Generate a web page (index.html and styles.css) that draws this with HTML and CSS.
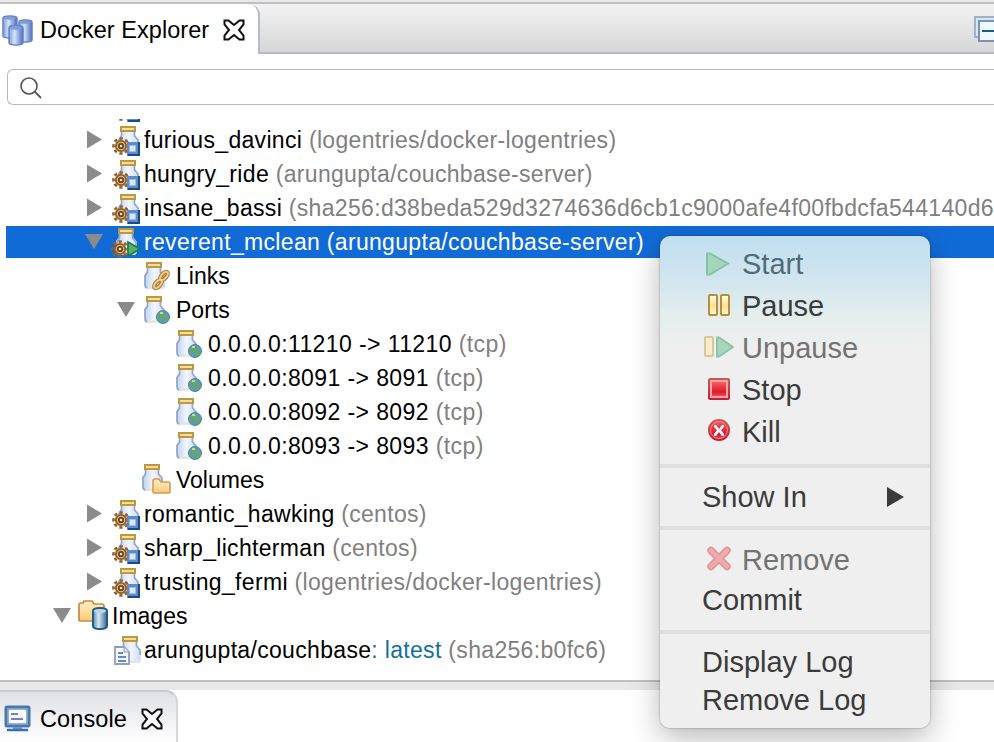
FILE: index.html
```
<!DOCTYPE html>
<html lang="en">
<head>
<meta charset="utf-8">
<title>Docker Explorer</title>
<link rel="stylesheet" href="styles.css">
</head>
<body>
<svg class="defs" aria-hidden="true">
  <defs>
    <linearGradient id="glass"><stop stop-color="#bccfe9"/><stop offset=".5" stop-color="#f1f6ff"/><stop offset="1" stop-color="#cfdcf1"/></linearGradient>
    <linearGradient id="cyl"><stop stop-color="#7f9fdb"/><stop offset=".4" stop-color="#d3e3f8"/><stop offset="1" stop-color="#4d6cbd"/></linearGradient>
    <linearGradient id="steel"><stop stop-color="#5689ac"/><stop offset=".4" stop-color="#d5e8f2"/><stop offset="1" stop-color="#38658f"/></linearGradient>
    <linearGradient id="folder" x2="0" y2="1"><stop stop-color="#fff0c2"/><stop offset="1" stop-color="#f7c97c"/></linearGradient>
    <linearGradient id="pausefill" x2="0" y2="1"><stop stop-color="#fff"/><stop offset=".55" stop-color="#ffe08c"/><stop offset="1" stop-color="#fffbe8"/></linearGradient>
    <linearGradient id="red" x2="0" y2="1"><stop stop-color="#f0606a"/><stop offset=".7" stop-color="#e0182b"/><stop offset="1" stop-color="#ee4a57"/></linearGradient>
    <linearGradient id="rededge" x2="0" y2="1"><stop stop-color="#c75c54"/><stop offset="1" stop-color="#c91b37"/></linearGradient>
    <g id="jar">
      <path d="M3 9h14v3l4 5v9q0 4-3 4H4q-4 0-4-4V16l3-4z" fill="url(#glass)"/>
      <path d="M3.500 9v4L1 17v8q0 3 2 4M16.500 9v4l3.500 4v5" fill="none" stroke="#93a9c8" stroke-width="1.700"/>
      <path d="M4 28.500h12" stroke="#e6e4d2" stroke-width="2"/>
      <path d="M2 3h16v6H2z" fill="#bd9843"/><path d="M4 5h12v2H4z" fill="#f5df95"/>
    </g>
    <g id="gear">
      <circle cx="9" cy="9" r="7.500" fill="none" stroke="#94602c" stroke-width="2.600" stroke-dasharray="3.200 2.690" stroke-dashoffset="1.600"/>
      <circle cx="9" cy="9" r="5.200" fill="#edb750" stroke="#8f5a25" stroke-width="1.800"/>
      <circle cx="9" cy="9" r="2.200" fill="#f4e6d0" stroke="#5b443c" stroke-width="1.800"/>
    </g>
    <g id="stopped">
      <use href="#jar" x="6"/>
      <use href="#gear" y="14"/>
      <path d="M15 19h13v14H15z" fill="#5f8bc8"/><path d="M27 19v13H16" fill="none" stroke="#174b8a" stroke-width="2"/>
      <path d="M17.500 22.500h6v6h-6z" fill="#d9e8fb" stroke="#9dbbe4"/>
    </g>
    <g id="running">
      <use href="#jar" x="4"/>
      <use href="#gear" x="-1" y="15"/>
      <path d="M16 17l12 7-12 7z" fill="#5aae72" stroke="#16804c" stroke-width="1.800"/>
    </g>
    <g id="ports">
      <use href="#jar"/>
      <circle cx="19" cy="24" r="6.500" fill="#579cba" stroke="#4a85a8"/>
      <path d="M15 20l5-1 1 3-3 3-4-1zM20 25l4-2-1 5-3 1zM14 26l3 1v2z" fill="#72a747"/>
      <path d="M16 20l3 0" stroke="#cbe9e9" stroke-width="1.500"/>
    </g>
    <g id="links">
      <use href="#jar"/>
      <g fill="none" stroke="#b07a36" stroke-width="4.200"><ellipse cx="14" cy="25" rx="5" ry="2.500" transform="rotate(-48 14 25)"/><ellipse cx="20" cy="17" rx="5" ry="2.500" transform="rotate(-48 20 17)"/></g>
      <g fill="none" stroke="#f0cf90" stroke-width="1.900"><ellipse cx="14" cy="25" rx="5" ry="2.500" transform="rotate(-48 14 25)"/><ellipse cx="20" cy="17" rx="5" ry="2.500" transform="rotate(-48 20 17)"/></g>
    </g>
    <g id="volumes">
      <use href="#jar" x="-2" y="-2"/>
      <path d="M9 18q0-2 2-2h4l2 3h7q2 0 2 2v8q0 1-1 1H10q-1 0-1-1z" fill="url(#folder)" stroke="#d79a4f" stroke-width="1.600"/>
    </g>
    <g id="images">
      <path d="M-1 6q0-2 2-2h2l1-2h8l2 3h8q2 0 2 2v14q0 1-1 1H0q-1 0-1-1z" fill="url(#folder)" stroke="#c98a42" stroke-width="1.700"/>
      <path d="M13 12q0-3 7-3t7 3v15q0 3-7 3t-7-3z" fill="url(#steel)" stroke="#1f5c88" stroke-width="2"/>
      <ellipse cx="20" cy="12" rx="6" ry="2" fill="#b7d5e4"/>
    </g>
    <g id="image">
      <use href="#jar" x="8"/>
      <path d="M3 14h9l5 5v12H3z" fill="#f5f9ff" stroke="#8d9fba" stroke-width="1.800"/>
      <path d="M12 14v5h5" fill="#dbe4f1" stroke="#8d9fba"/>
      <path d="M6 20h5M6 24h8M6 28h8" stroke="#6788c8" stroke-width="1.800"/>
    </g>
    <path id="right" d="M7 7.500v18L22 16.500z" fill="#8b8b8b"/>
    <path id="down" d="M5 9h18l-9 15z" fill="#8b8b8b"/>
    <path id="close" d="M1.500 1.500h4l5.500 4.500 5.500-4.500h4v4l-4.500 5.500 4.500 5.500v4h-4L11 16l-5.500 4.500h-4v-4L6 11 1.500 5.500z" fill="#fff" stroke="#111" stroke-width="2"/>
  </defs>
</svg>

<div class="workbench">
  <header class="tabbar">
    <div class="tab">
      <svg class="docker" viewBox="0 0 31 31">
        <g fill="url(#cyl)" stroke="#6282c8" stroke-width="1.500"><path d="M1 3q0-2 7-2t7 2v18q0 2-7 2t-7-2z"/><path d="M17 7q0-2 6.500-2t6.500 2v18q0 2-6.500 2T17 25z"/><path d="M7 13q0-2.500 7-2.500t7 2.500v14.500q0 2.500-7 2.500t-7-2.500z"/></g>
        <g fill="#7f9bd8"><ellipse cx="8" cy="3.300" rx="6" ry="1.500"/><ellipse cx="23.500" cy="7.300" rx="5.500" ry="1.500"/><ellipse cx="14" cy="13" rx="6" ry="1.700"/></g>
      </svg>
      <span class="tab-title">Docker Explorer</span>
      <svg class="close"><use href="#close"/></svg>
    </div>
    <div class="toolbar">
      <svg class="collapse" viewBox="0 0 20 28"><path d="M1 1h24v20H1z" fill="#cfeaf6" stroke="#a3afc7" stroke-width="2"/><path d="M5 5h24v20H5z" fill="#eefaff" stroke="#8090b4" stroke-width="2"/><path d="M8 15h12" stroke="#175b93" stroke-width="2"/></svg>
    </div>
  </header>

  <div class="search">
    <svg viewBox="0 0 24 24"><circle cx="10" cy="10" r="8" fill="none" stroke="#555" stroke-width="1.600"/><path d="M15.700 15.700l6.300 6.300" stroke="#555" stroke-width="1.800"/></svg>
  </div>

  <main class="tree">
    <div class="row l2 clipped"><svg></svg><svg><use href="#stopped"/></svg></div>
    <div class="row l2"><svg><use href="#right"/></svg><svg><use href="#stopped"/></svg><span>furious_davinci <i>(logentries/docker-logentries)</i></span></div>
    <div class="row l2"><svg><use href="#right"/></svg><svg><use href="#stopped"/></svg><span>hungry_ride <i>(arungupta/couchbase-server)</i></span></div>
    <div class="row l2"><svg><use href="#right"/></svg><svg><use href="#stopped"/></svg><span>insane_bassi <i>(sha256:d38beda529d3274636d6cb1c9000afe4f00fbdcfa544140d6e</i></span></div>
    <div class="row l2 selected"><svg><use href="#down"/></svg><svg><use href="#running"/></svg><span>reverent_mclean <i>(arungupta/couchbase-server)</i></span></div>
    <div class="row l3"><svg></svg><svg><use href="#links"/></svg><span class="label">Links</span></div>
    <div class="row l3"><svg><use href="#down"/></svg><svg><use href="#ports"/></svg><span class="label">Ports</span></div>
    <div class="row l4"><svg></svg><svg><use href="#ports"/></svg><span class="port">0.0.0.0:11210 -&gt; 11210 <i>(tcp)</i></span></div>
    <div class="row l4"><svg></svg><svg><use href="#ports"/></svg><span class="port">0.0.0.0:8091 -&gt; 8091 <i>(tcp)</i></span></div>
    <div class="row l4"><svg></svg><svg><use href="#ports"/></svg><span class="port">0.0.0.0:8092 -&gt; 8092 <i>(tcp)</i></span></div>
    <div class="row l4"><svg></svg><svg><use href="#ports"/></svg><span class="port">0.0.0.0:8093 -&gt; 8093 <i>(tcp)</i></span></div>
    <div class="row l3"><svg></svg><svg><use href="#volumes"/></svg><span class="label">Volumes</span></div>
    <div class="row l2"><svg><use href="#right"/></svg><svg><use href="#stopped"/></svg><span>romantic_hawking <i>(centos)</i></span></div>
    <div class="row l2"><svg><use href="#right"/></svg><svg><use href="#stopped"/></svg><span>sharp_lichterman <i>(centos)</i></span></div>
    <div class="row l2"><svg><use href="#right"/></svg><svg><use href="#stopped"/></svg><span>trusting_fermi <i>(logentries/docker-logentries)</i></span></div>
    <div class="row l1"><svg><use href="#down"/></svg><svg><use href="#images"/></svg><span class="label">Images</span></div>
    <div class="row l2"><svg></svg><svg><use href="#image"/></svg><span>arungupta/couchbase<b>: latest</b> <i>(sha256:b0fc6)</i></span></div>
  </main>

  <div class="sash"></div>
  <footer class="console">
    <div class="console-tab">
      <svg class="monitor" viewBox="0 0 28 28"><rect x="2" y="2" width="23" height="19" rx="1" fill="#f6faff" stroke="#4278b6" stroke-width="3"/><path d="M4 4h19v15H4z" fill="none" stroke="#8194b6" stroke-width="1.500"/><path d="M7 9h7M7 14h12" stroke="#7580b4" stroke-width="2"/><path d="M9 22h9v2H9z" fill="#7d97bd"/><path d="M3 25h21" stroke="#376eae" stroke-width="2.500"/></svg>
      <span class="tab-title">Console</span>
      <svg class="close"><use href="#close"/></svg>
    </div>
  </footer>
</div>

<nav class="menu">
  <div class="item off"><svg viewBox="0 0 34 34"><path d="M7 6.500h3L28 16.500 10 27.500H7z" fill="#a6d5bb" stroke="#83c4a8" stroke-width="2"/></svg><span>Start</span></div>
  <div class="item"><svg viewBox="0 0 34 34"><g fill="url(#pausefill)" stroke="#b98f32" stroke-width="2"><rect x="9" y="6" width="8" height="20" rx="1"/><rect x="21" y="6" width="8" height="20" rx="1"/></g></svg><span>Pause</span></div>
  <div class="item off"><svg viewBox="0 0 34 34"><rect x="5" y="6" width="8" height="19" rx="1" fill="#f6edcf" stroke="#d9c79a" stroke-width="2"/><path d="M17 6.500h2l14 9.500-14 9.500h-2z" fill="#a9d5bc" stroke="#8bc4a9" stroke-width="2"/></svg><span>Unpause</span></div>
  <div class="item"><svg viewBox="0 0 34 34"><rect x="9" y="6" width="20" height="20" rx="1" fill="#f4a5a3" stroke="url(#rededge)" stroke-width="2"/><path d="M12 9h14v14H12z" fill="url(#red)"/></svg><span>Stop</span></div>
  <div class="item"><svg viewBox="0 0 34 34"><circle cx="19" cy="15" r="10" fill="url(#red)" stroke="url(#rededge)" stroke-width="2"/><circle cx="19" cy="15" r="8.500" fill="none" stroke="#f4a09b" stroke-width=".8"/><path d="M14 10h2l3 4 3-4h2v2l-3 3 3 4v2h-2l-3-4-3 4h-2v-2l3-4-3-3z" fill="#fff"/></svg><span>Kill</span></div>
  <hr>
  <div class="item plain show"><span>Show In</span><svg class="submenu" viewBox="0 0 18 20"><path d="M0 0v20l17-10z" fill="#3b3b3b"/></svg></div>
  <hr class="flush">
  <div class="item off remove"><svg viewBox="0 0 34 34"><g fill="none" stroke-linecap="round"><path d="M11 7.500l16 16M27 7.500l-16 16" stroke="#df979b" stroke-width="7.500"/><path d="M11 7.500l16 16M27 7.500l-16 16" stroke="#f2a9ac" stroke-width="4.500"/></g></svg><span>Remove</span></div>
  <div class="item plain">Commit</div>
  <hr>
  <div class="item plain display">Display Log</div>
  <div class="item plain">Remove Log</div>
</nav>
</body>
</html>
```
FILE: styles.css
```
* { box-sizing: border-box; }
body {
  margin: 0;
  width: 994px;
  height: 742px;
  overflow: hidden;
  background: #fff;
  color: #000;
  font: 23px/34px "Liberation Sans", Arial, sans-serif;
  letter-spacing: .32px;
}
svg { display: block; flex: none; }
.defs { position: absolute; width: 0; height: 0; }
i { font-style: normal; color: #808080; }
b { font-weight: normal; color: #12709c; }

.workbench { display: flex; flex-direction: column; height: 742px; }

.tabbar {
  display: flex;
  height: 54px;
  flex: none;
  border-top: 2px solid #e8e8e8;
}
.tab {
  display: flex;
  align-items: center;
  width: 260px;
  padding: 2px 0 0 2px;
  border-top: 2px solid #c0c1bc;
  background: #f3f3f3;
  position: relative;
  z-index: 0;
}
.tab::before {
  content: "";
  position: absolute;
  inset: 0;
  z-index: -1;
  background: #fff;
  border-right: 2px solid #b4bacf;
  border-top-right-radius: 11px;
}
.docker { width: 31px; height: 31px; margin-right: 7px; }
.tab-title { white-space: nowrap; font-size: 23.5px; }
.tab .tab-title { width: 183px; letter-spacing: .05px; }
.close { width: 22px; height: 22px; }
.toolbar {
  flex: 1;
  display: flex;
  justify-content: flex-end;
  padding-top: 12px;
  border-top: 2px solid #c0c1bc;
  border-bottom: 2px solid #b4bacf;
  background: linear-gradient(#f3f3f3, #d6d6d6);
}
.collapse { width: 20px; height: 28px; }

.search {
  flex: none;
  display: flex;
  align-items: center;
  height: 36px;
  margin: 15px 0 14px 7px;
  padding: 2px 0 0 11px;
  border: 1px solid #b9b9b9;
  border-right: 0;
  border-radius: 6px 0 0 6px;
}
.search svg { width: 24px; height: 24px; }

.tree {
  flex: none;
  height: 561px;
  padding-left: 6px;
  overflow: hidden;
}
.row {
  display: flex;
  height: 34px;
  white-space: nowrap;
}
.row svg { width: 32px; height: 34px; overflow: visible; }
.label { letter-spacing: 0; }
.port { letter-spacing: .4px; }
.row.clipped { margin-top: -30px; }
.l1 { padding-left: 42px; }
.l2 { padding-left: 74px; }
.l3 { padding-left: 106px; }
.l4 { padding-left: 138px; }
.selected { color: #fff; background: linear-gradient(#116bd7, #116bd7) 0 1px / 100% 32px no-repeat; }
.selected i { color: #fff; }

.sash {
  flex: none;
  height: 10px;
  border-top: 2px solid #c0c1bc;
  background: #e8e8e8;
}
.console { flex: 1; }
.console-tab {
  display: flex;
  align-items: center;
  width: 178px;
  height: 52px;
  padding: 3px 0 0 4px;
  border-top: 2px solid #c8cad7;
  border-right: 2px solid #d5d7e1;
  border-top-right-radius: 12px;
  background: linear-gradient(#dfe0e6, #fff);
}
.monitor { width: 28px; height: 28px; margin-right: 8px; }
.console-tab .tab-title { width: 101px; letter-spacing: .1px; }

.menu {
  position: absolute;
  left: 660px;
  top: 236px;
  width: 270px;
  height: 492px;
  padding-top: 7px;
  border-radius: 10px;
  color: #3b3b3b;
  background: linear-gradient(#c1dff0, #d0e5ef 42px, #e4eeed 80px, #efefef 112px);
  box-shadow: 0 0 2px rgba(0, 0, 0, .45), 0 10px 30px rgba(0, 0, 0, .28);
  font-size: 29px;
  letter-spacing: 0;
}
.item {
  display: flex;
  align-items: center;
  height: 42px;
  padding-left: 40px;
  white-space: nowrap;
}
.item svg { width: 34px; height: 34px; margin-right: 8px; }
.off { color: #737373; }
.item.off:first-child { color: #526b78; }
.plain { height: 38px; padding-left: 42px; }
.menu hr { height: 4px; margin: 11px 0 0; border: 0; background: #dfdfdf; }
.menu hr.flush { margin-top: 0; }
.show { height: 58px; justify-content: space-between; padding-right: 25px; }
.item .submenu { width: 18px; height: 20px; margin: 0; }
.remove { margin-top: 9px; }
.display { margin-top: 9px; }
```
